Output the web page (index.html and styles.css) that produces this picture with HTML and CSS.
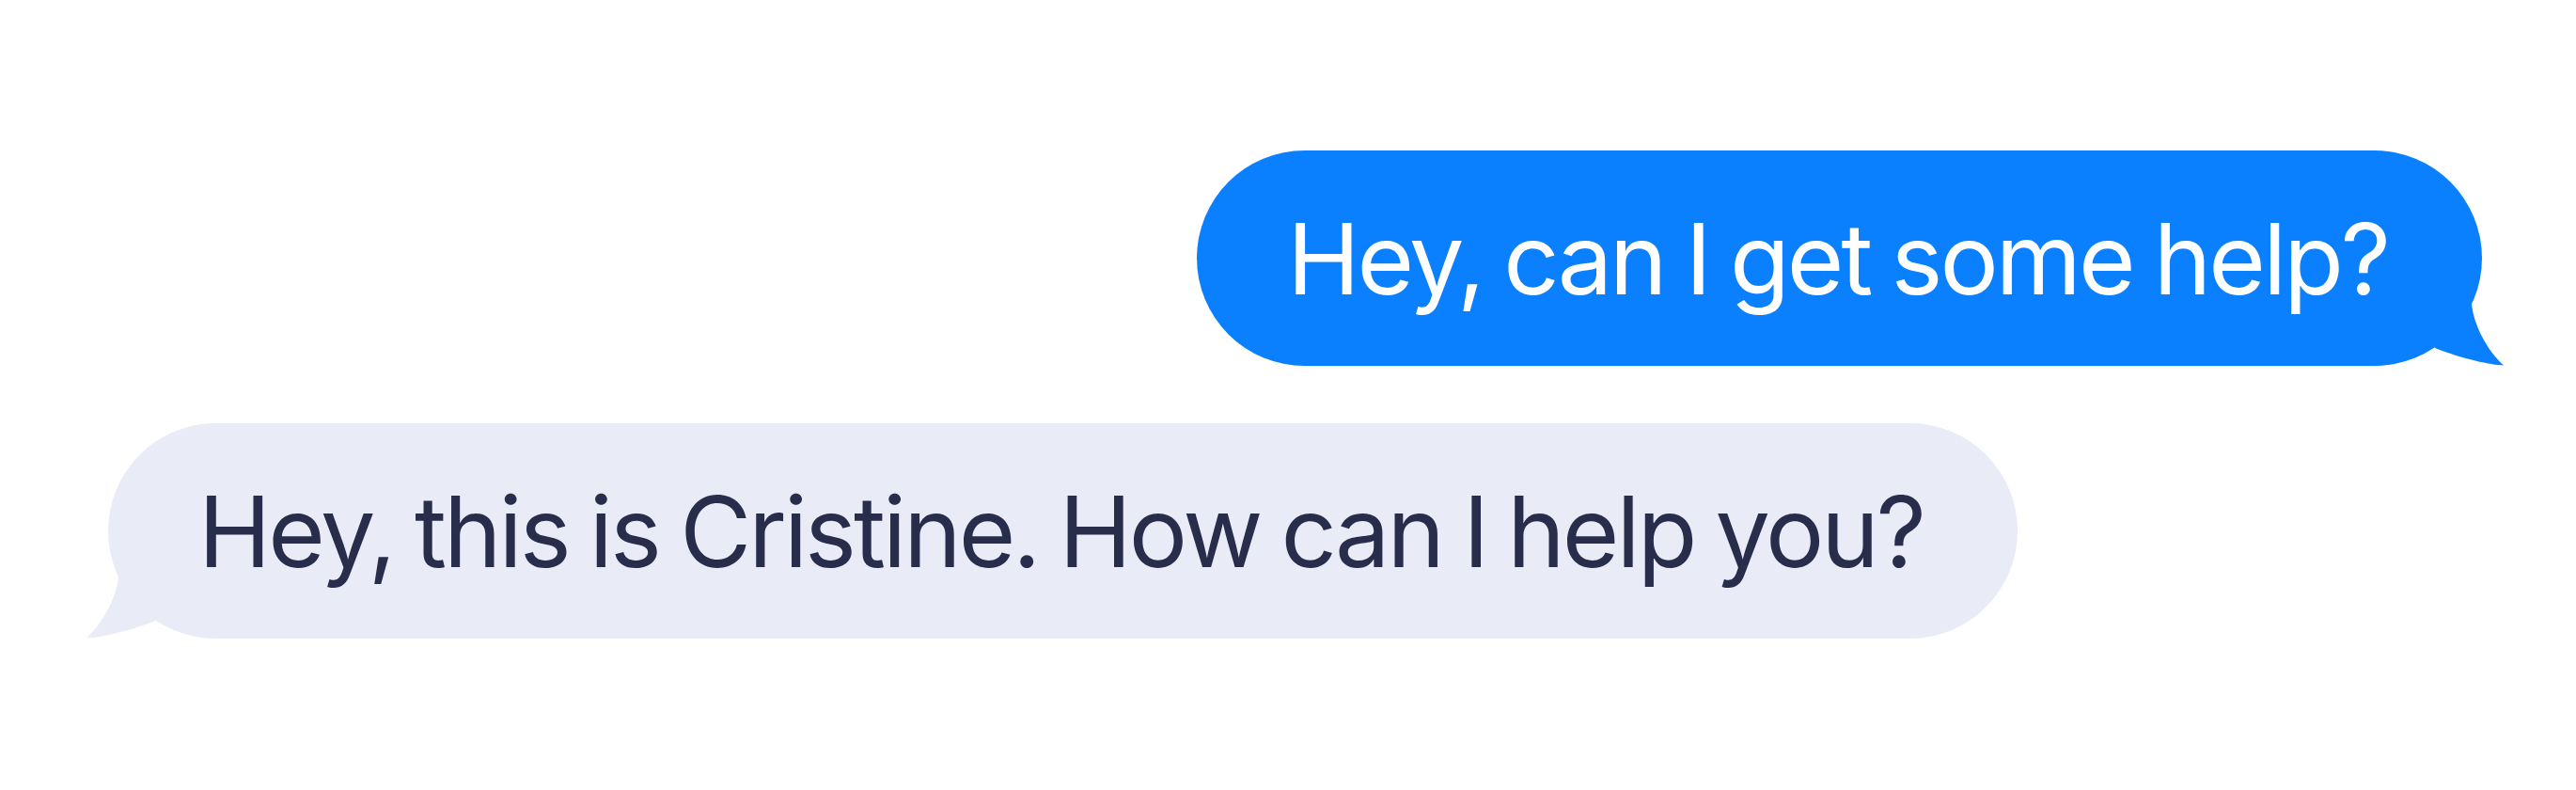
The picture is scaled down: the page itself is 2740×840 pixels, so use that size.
FILE: index.html
```html
<!DOCTYPE html>
<html>
<head>
<meta charset="utf-8">
<link rel="stylesheet" href="styles.css">
</head>
<body>
<div class="chat">
  <div class="bubble sent">
    <span class="text">Hey, can I get some help?</span>
    <svg class="tail tail-right" width="90" height="80" viewBox="0 0 90 80"><path d="M49,14 C51,36 65,63 83,79.5 C70,79 40,73 10,61 L10,10 Z"/></svg>
  </div>
  <div class="bubble received">
    <span class="text">Hey, this is Cristine. How can I help you?</span>
    <svg class="tail tail-left" width="90" height="80" viewBox="0 0 90 80"><path d="M41,14 C39,36 25,63 7,79.5 C20,79 50,73 80,61 L80,10 Z"/></svg>
  </div>
</div>
</body>
</html>
```
FILE: styles.css
```css
html, body {
  margin: 0;
  padding: 0;
  background: #ffffff;
}
.chat {
  display: flex;
  flex-direction: column;
  padding-top: 160px;
  gap: 61px;
  width: 2740px;
  height: 840px;
  box-sizing: border-box;
}
.bubble {
  position: relative;
  display: flex;
  align-items: center;
  height: 229px;
  box-sizing: border-box;
  border-radius: 115px;
  padding: 0 100px 0 96px;
  font-family: "Inter", "Noto Sans", sans-serif;
  font-size: 104px;
  line-height: 1;
  letter-spacing: -3px;
  word-spacing: -4px;
}
.text {
  white-space: nowrap;
  position: relative;
  z-index: 1;
}
.sent {
  align-self: flex-end;
  margin-right: 100px;
  background: #0a80ff;
  color: #ffffff;
}
.received {
  align-self: flex-start;
  margin-left: 115px;
  background: #e9ecf6;
  color: #272d4b;
}
.tail {
  position: absolute;
  bottom: 0;
}
.tail-right {
  right: -30px;
  fill: #0a80ff;
}
.tail-left {
  left: -30px;
  fill: #e9ecf6;
}
```
